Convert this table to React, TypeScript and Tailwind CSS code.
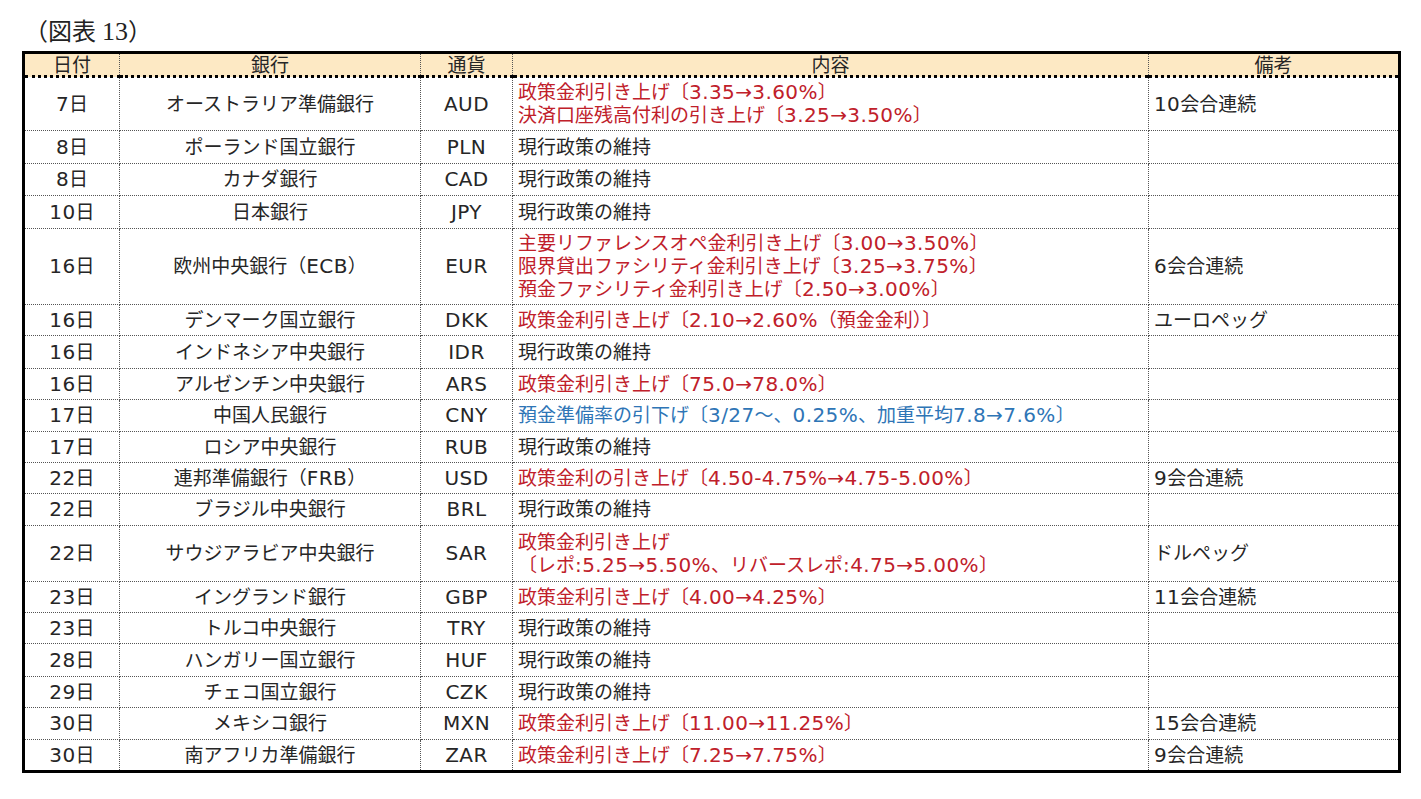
import * as React from 'react';

type Row = {
  date: string;
  bank: string;
  cur: string;
  content: string[];
  tone?: 'red' | 'blue';
  note?: string;
  h: number;
};

const rows: Row[] = [
  { date: '7日', bank: 'オーストラリア準備銀行', cur: 'AUD', content: ['政策金利引き上げ〔3.35→3.60%〕', '決済口座残高付利の引き上げ〔3.25→3.50%〕'], tone: 'red', note: '10会合連続', h: 54 },
  { date: '8日', bank: 'ポーランド国立銀行', cur: 'PLN', content: ['現行政策の維持'], h: 33 },
  { date: '8日', bank: 'カナダ銀行', cur: 'CAD', content: ['現行政策の維持'], h: 32 },
  { date: '10日', bank: '日本銀行', cur: 'JPY', content: ['現行政策の維持'], h: 33 },
  { date: '16日', bank: '欧州中央銀行（ECB）', cur: 'EUR', content: ['主要リファレンスオペ金利引き上げ〔3.00→3.50%〕', '限界貸出ファシリティ金利引き上げ〔3.25→3.75%〕', '預金ファシリティ金利引き上げ〔2.50→3.00%〕'], tone: 'red', note: '6会合連続', h: 76 },
  { date: '16日', bank: 'デンマーク国立銀行', cur: 'DKK', content: ['政策金利引き上げ〔2.10→2.60%（預金金利）〕'], tone: 'red', note: 'ユーロペッグ', h: 31 },
  { date: '16日', bank: 'インドネシア中央銀行', cur: 'IDR', content: ['現行政策の維持'], h: 33 },
  { date: '16日', bank: 'アルゼンチン中央銀行', cur: 'ARS', content: ['政策金利引き上げ〔75.0→78.0%〕'], tone: 'red', h: 31 },
  { date: '17日', bank: '中国人民銀行', cur: 'CNY', content: ['預金準備率の引下げ〔3/27～、0.25%、加重平均7.8→7.6%〕'], tone: 'blue', h: 32 },
  { date: '17日', bank: 'ロシア中央銀行', cur: 'RUB', content: ['現行政策の維持'], h: 31 },
  { date: '22日', bank: '連邦準備銀行（FRB）', cur: 'USD', content: ['政策金利の引き上げ〔4.50-4.75%→4.75-5.00%〕'], tone: 'red', note: '9会合連続', h: 31 },
  { date: '22日', bank: 'ブラジル中央銀行', cur: 'BRL', content: ['現行政策の維持'], h: 32 },
  { date: '22日', bank: 'サウジアラビア中央銀行', cur: 'SAR', content: ['政策金利引き上げ', '〔レポ:5.25→5.50%、リバースレポ:4.75→5.00%〕'], tone: 'red', note: 'ドルペッグ', h: 56 },
  { date: '23日', bank: 'イングランド銀行', cur: 'GBP', content: ['政策金利引き上げ〔4.00→4.25%〕'], tone: 'red', note: '11会合連続', h: 31 },
  { date: '23日', bank: 'トルコ中央銀行', cur: 'TRY', content: ['現行政策の維持'], h: 31 },
  { date: '28日', bank: 'ハンガリー国立銀行', cur: 'HUF', content: ['現行政策の維持'], h: 33 },
  { date: '29日', bank: 'チェコ国立銀行', cur: 'CZK', content: ['現行政策の維持'], h: 31 },
  { date: '30日', bank: 'メキシコ銀行', cur: 'MXN', content: ['政策金利引き上げ〔11.00→11.25%〕'], tone: 'red', note: '15会合連続', h: 32 },
  { date: '30日', bank: '南アフリカ準備銀行', cur: 'ZAR', content: ['政策金利引き上げ〔7.25→7.75%〕'], tone: 'red', note: '9会合連続', h: 32 },
];

// latin runs are a touch wider in the original font
const Txt = ({ s }: { s: string }) => (
  <>
    {s.split(/([\x21-\x7E→]+)/).map((part, i) =>
      i % 2 === 1 ? (
        <span key={i} className="text-[20px] tracking-[0.4px]">
          {part}
        </span>
      ) : (
        <React.Fragment key={i}>{part}</React.Fragment>
      ),
    )}
  </>
);

const cell = 'border border-dotted border-[#555] align-middle p-0';
const head =
  'border border-dotted border-[#555] border-b-[3px] border-b-black border-b-solid bg-[#fde9c4] font-normal text-center leading-[20px] p-0';

export default function App() {
  return (
    <div className="min-h-screen bg-white text-[#262626] font-['DejaVu_Sans','Noto_Sans_CJK_JP',sans-serif]">
      <div className="pl-[24px] pt-[17px] h-[51px] text-[24px] leading-[30px] text-[#222] font-['Liberation_Serif','Noto_Sans_CJK_JP',serif]">
        （図表 <span className="text-[26px]">13</span>）
      </div>
      <table className="ml-[22px] w-[1376px] table-fixed border-collapse border-[3px] border-black text-[19px] leading-[23px]">
        <colgroup>
          <col className="w-[96px]" />
          <col className="w-[301px]" />
          <col className="w-[92px]" />
          <col className="w-[636px]" />
          <col className="w-[251px]" />
        </colgroup>
        <thead>
          <tr className="h-[24px]">
            <th className={head}>日付</th>
            <th className={head}>銀行</th>
            <th className={head}>通貨</th>
            <th className={head}>内容</th>
            <th className={head}>備考</th>
          </tr>
        </thead>
        <tbody>
          {rows.map((r, i) => (
            <tr key={i} style={{ height: r.h }}>
              <td className={`${cell} text-center`}>
                <Txt s={r.date} />
              </td>
              <td className={`${cell} text-center`}>
                <Txt s={r.bank} />
              </td>
              <td className={`${cell} text-center`}>
                <Txt s={r.cur} />
              </td>
              <td
                className={`${cell} pl-[5px] whitespace-nowrap ${
                  r.tone === 'red' ? 'text-[#c0202a]' : r.tone === 'blue' ? 'text-[#2e75b6]' : ''
                }`}
              >
                {r.content.map((c, j) => (
                  <div key={j}>
                    <Txt s={c} />
                  </div>
                ))}
              </td>
              <td className={`${cell} pl-[5px]`}>
                <Txt s={r.note ?? ''} />
              </td>
            </tr>
          ))}
        </tbody>
      </table>
    </div>
  );
}
